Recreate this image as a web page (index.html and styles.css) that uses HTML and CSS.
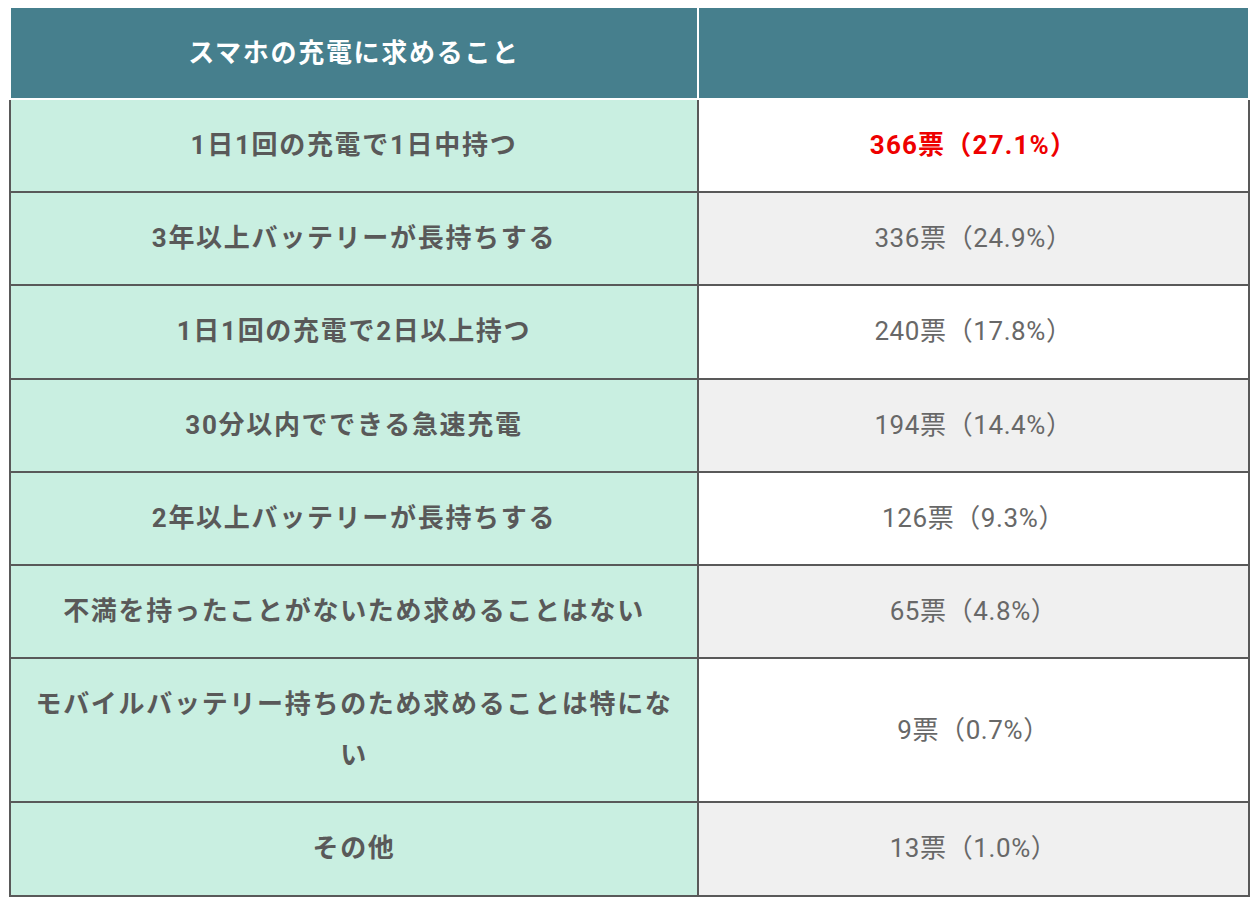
FILE: index.html
```html
<!DOCTYPE html>
<html lang="ja">
<head>
<meta charset="utf-8">
<link rel="stylesheet" href="styles.css">
</head>
<body>
<table class="vote">
  <colgroup><col class="c1"><col class="c2"></colgroup>
  <thead>
    <tr><th>スマホの充電に求めること</th><th></th></tr>
  </thead>
  <tbody>
    <tr><td class="q">1日1回の充電で1日中持つ</td><td class="a top">366票（27.1%）</td></tr>
    <tr class="alt"><td class="q">3年以上バッテリーが長持ちする</td><td class="a">336票（24.9%）</td></tr>
    <tr><td class="q">1日1回の充電で2日以上持つ</td><td class="a">240票（17.8%）</td></tr>
    <tr class="alt"><td class="q">30分以内でできる急速充電</td><td class="a">194票（14.4%）</td></tr>
    <tr><td class="q">2年以上バッテリーが長持ちする</td><td class="a">126票（9.3%）</td></tr>
    <tr class="alt"><td class="q">不満を持ったことがないため求めることはない</td><td class="a">65票（4.8%）</td></tr>
    <tr><td class="q">モバイルバッテリー持ちのため求めることは特にない</td><td class="a">9票（0.7%）</td></tr>
    <tr class="alt"><td class="q">その他</td><td class="a">13票（1.0%）</td></tr>
  </tbody>
</table>
</body>
</html>
```

FILE: styles.css
```css
html, body {
  margin: 0;
  padding: 0;
  background: #ffffff;
}
body {
  font-family: Roboto, "Noto Sans CJK JP", sans-serif;
  color: #595959;
}
.vote {
  border-collapse: collapse;
  table-layout: fixed;
  width: 1239px;
  margin: 6px 0 0 9px;
}
.c1 { width: 688px; }
.c2 { width: 551px; }
.vote th {
  background: #467f8d;
  color: #ffffff;
  border: 2px solid #ffffff;
  font-size: 26px;
  font-weight: 700;
  letter-spacing: 1.7px;
  line-height: 50px;
  padding: 20px 14px;
  text-align: center;
}
.vote td {
  border: 2px solid #595959;
  font-size: 26px;
  line-height: 51px;
  padding: 20.1px 14px;
  text-align: center;
}
.vote td.q {
  background: #c9efe1;
  font-weight: 700;
  letter-spacing: 1.7px;
}
.vote td.a {
  background: #ffffff;
  color: #686868;
  font-weight: 400;
  letter-spacing: 0.6px;
}
.vote tr.alt td.a {
  background: #f0f0f0;
}
.vote td.a.top {
  color: #ee0000;
  font-weight: 700;
  letter-spacing: 1.2px;
}
```
